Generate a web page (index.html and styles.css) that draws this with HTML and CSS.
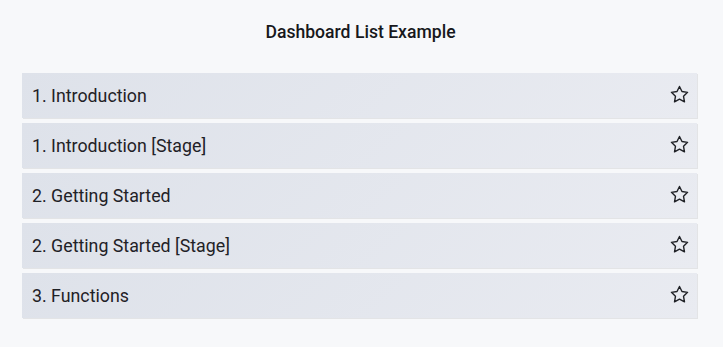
FILE: index.html
```html
<!DOCTYPE html>
<html>
<head>
<meta charset="utf-8">
<link rel="stylesheet" href="styles.css">
</head>
<body>
<div class="panel">
  <div class="panel-title">Dashboard List Example</div>
  <ul class="dashlist">
    <li class="dashlist-item"><span class="dashlist-title">1. Introduction</span><svg class="star" viewBox="0 0 24 24" width="21" height="21"><path d="M12 2.8l2.85 5.78 6.38.93-4.62 4.5 1.09 6.35L12 17.36l-5.7 3 1.09-6.35-4.62-4.5 6.38-.93z" fill="none" stroke="#1f2126" stroke-width="1.6" stroke-linejoin="round"/></svg></li>
    <li class="dashlist-item"><span class="dashlist-title">1. Introduction [Stage]</span><svg class="star" viewBox="0 0 24 24" width="21" height="21"><path d="M12 2.8l2.85 5.78 6.38.93-4.62 4.5 1.09 6.35L12 17.36l-5.7 3 1.09-6.35-4.62-4.5 6.38-.93z" fill="none" stroke="#1f2126" stroke-width="1.6" stroke-linejoin="round"/></svg></li>
    <li class="dashlist-item"><span class="dashlist-title">2. Getting Started</span><svg class="star" viewBox="0 0 24 24" width="21" height="21"><path d="M12 2.8l2.85 5.78 6.38.93-4.62 4.5 1.09 6.35L12 17.36l-5.7 3 1.09-6.35-4.62-4.5 6.38-.93z" fill="none" stroke="#1f2126" stroke-width="1.6" stroke-linejoin="round"/></svg></li>
    <li class="dashlist-item"><span class="dashlist-title">2. Getting Started [Stage]</span><svg class="star" viewBox="0 0 24 24" width="21" height="21"><path d="M12 2.8l2.85 5.78 6.38.93-4.62 4.5 1.09 6.35L12 17.36l-5.7 3 1.09-6.35-4.62-4.5 6.38-.93z" fill="none" stroke="#1f2126" stroke-width="1.6" stroke-linejoin="round"/></svg></li>
    <li class="dashlist-item"><span class="dashlist-title">3. Functions</span><svg class="star" viewBox="0 0 24 24" width="21" height="21"><path d="M12 2.8l2.85 5.78 6.38.93-4.62 4.5 1.09 6.35L12 17.36l-5.7 3 1.09-6.35-4.62-4.5 6.38-.93z" fill="none" stroke="#1f2126" stroke-width="1.6" stroke-linejoin="round"/></svg></li>
  </ul>
</div>
</body>
</html>
```
FILE: styles.css
```css
html, body {
  margin: 0;
  padding: 0;
  background: #f7f8fa;
}
body {
  font-family: Roboto, "Liberation Sans", sans-serif;
  color: #1f2126;
  width: 723px;
  height: 347px;
  overflow: hidden;
}
.panel {
  padding: 0 26px 0 22px;
}
.panel-title {
  box-sizing: border-box;
  height: 73px;
  padding: 0 0 0 2px;
  line-height: 64px;
  text-align: center;
  font-size: 17.6px;
  font-weight: 500;
  color: #17181c;
}
.dashlist {
  list-style: none;
  margin: 0;
  padding: 0;
  display: flex;
  flex-direction: column;
  gap: 5px;
}
.dashlist-item {
  height: 45px;
  display: flex;
  align-items: center;
  justify-content: space-between;
  padding: 0 7px 0 10px;
  background: linear-gradient(135deg, #dee2ea, #e9ebf1);
  box-shadow: -1px -1px 0 0 rgba(255,255,255,0.1), 1px 1px 0 0 rgba(0,0,0,0.08);
  font-size: 17.8px;
  color: #1f2126;
}
.dashlist-title {
  line-height: 45px;
}
.star {
  display: block;
  margin-top: -3px;
}
```
